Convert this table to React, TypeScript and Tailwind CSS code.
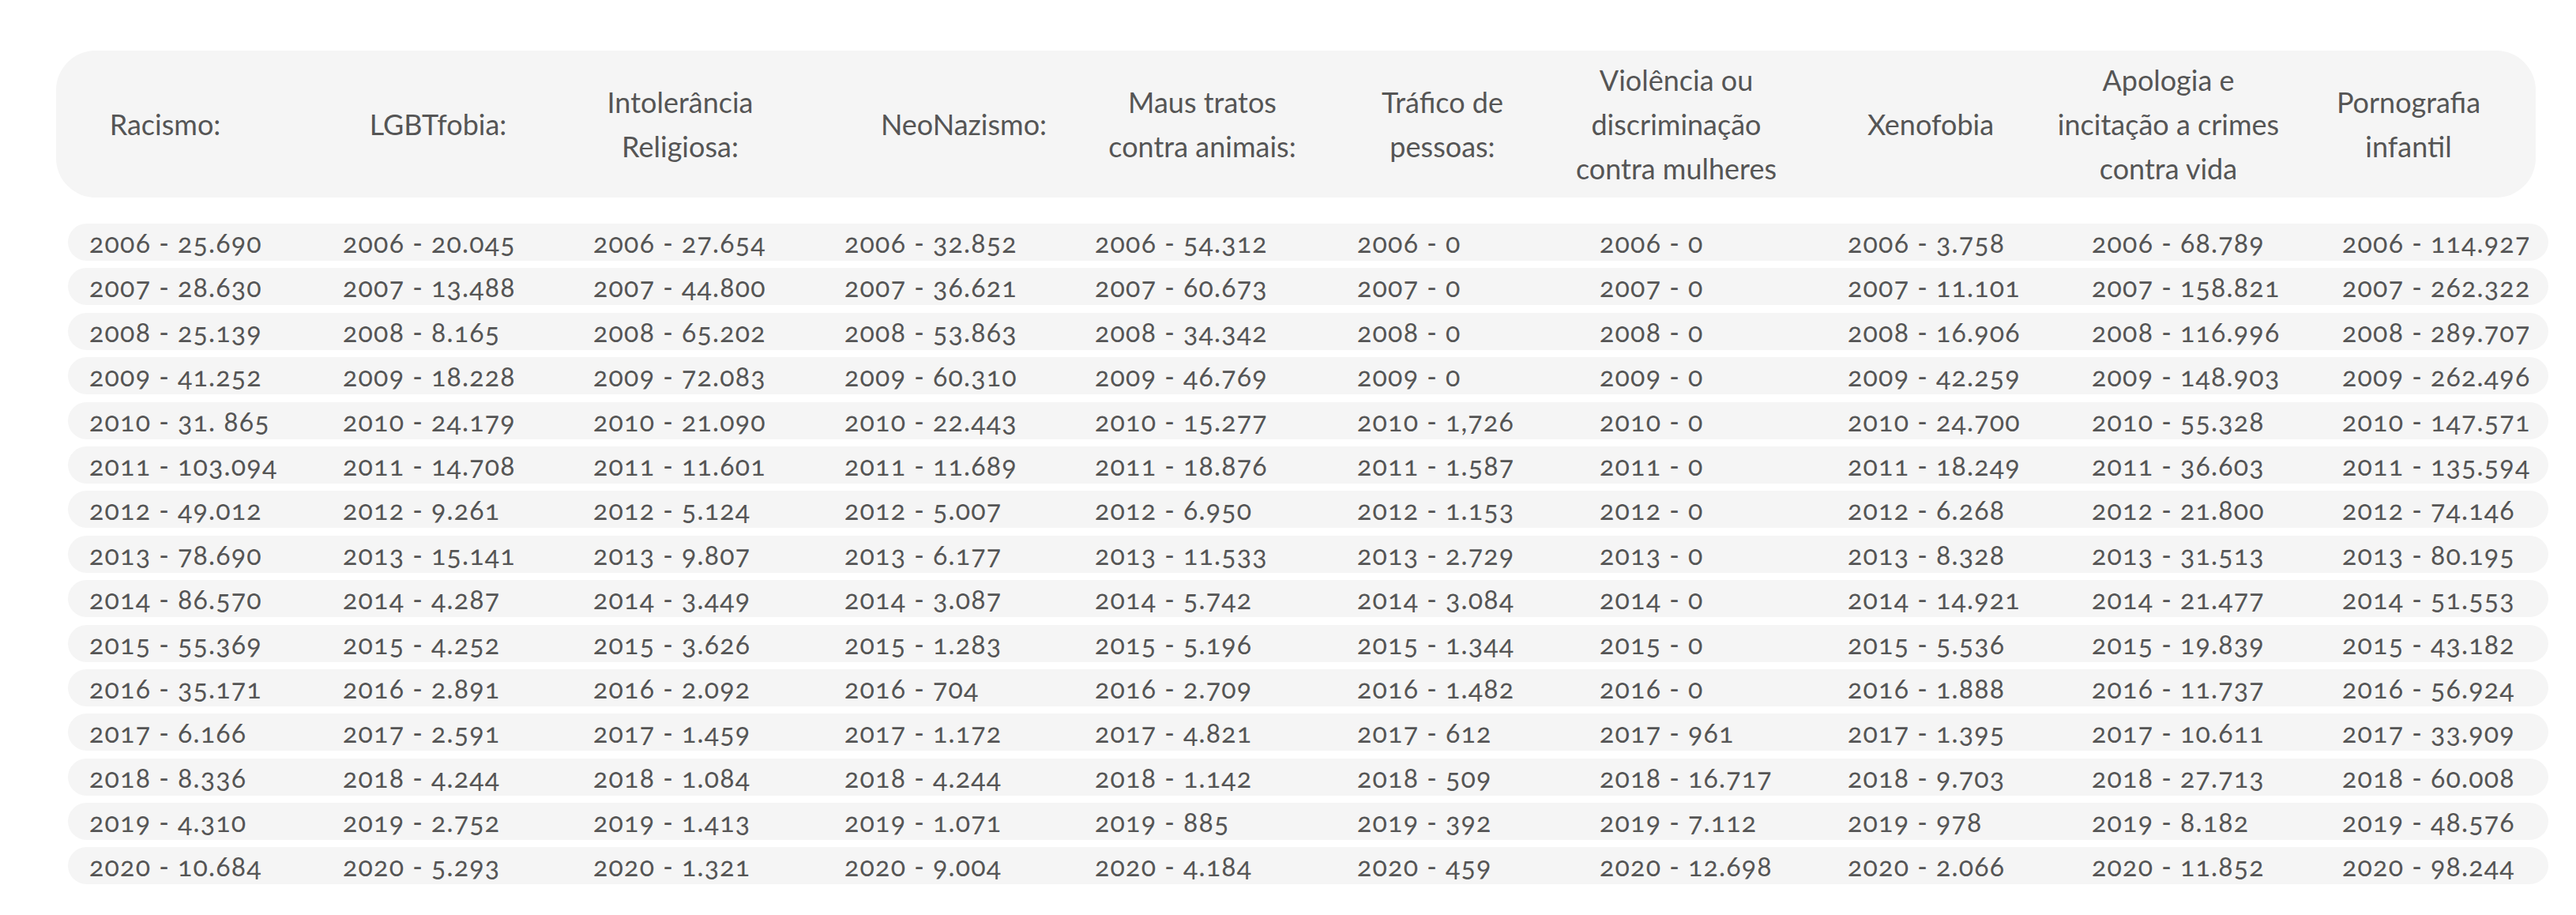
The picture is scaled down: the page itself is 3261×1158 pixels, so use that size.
import React from "react";

const headers: { lines: string[]; ml: string }[] = [
  { lines: ["Racismo:"], ml: "ml-[3px]" },
  { lines: ["LGBTfobia:"], ml: "ml-[75.5px]" },
  { lines: ["Intolerância", "Religiosa:"], ml: "ml-[36.5px]" },
  { lines: ["NeoNazismo:"], ml: "ml-[89px]" },
  { lines: ["Maus tratos", "contra animais:"], ml: "ml-[32px]" },
  { lines: ["Tráfico de", "pessoas:"], ml: "ml-[34px]" },
  { lines: ["Violência ou", "discriminação", "contra mulheres"], ml: "ml-[26px]" },
  { lines: ["Xenofobia"], ml: "ml-[52px]" },
  { lines: ["Apologia e", "incitação a crimes", "contra vida"], ml: "ml-[31px]" },
  { lines: ["Pornografia", "infantil"], ml: "ml-[34px]" },
];

const rows: [string, string[]][] = [
  ["2006", ["25.690", "20.045", "27.654", "32.852", "54.312", "0", "0", "3.758", "68.789", "114.927"]],
  ["2007", ["28.630", "13.488", "44.800", "36.621", "60.673", "0", "0", "11.101", "158.821", "262.322"]],
  ["2008", ["25.139", "8.165", "65.202", "53.863", "34.342", "0", "0", "16.906", "116.996", "289.707"]],
  ["2009", ["41.252", "18.228", "72.083", "60.310", "46.769", "0", "0", "42.259", "148.903", "262.496"]],
  ["2010", ["31. 865", "24.179", "21.090", "22.443", "15.277", "1,726", "0", "24.700", "55.328", "147.571"]],
  ["2011", ["103.094", "14.708", "11.601", "11.689", "18.876", "1.587", "0", "18.249", "36.603", "135.594"]],
  ["2012", ["49.012", "9.261", "5.124", "5.007", "6.950", "1.153", "0", "6.268", "21.800", "74.146"]],
  ["2013", ["78.690", "15.141", "9.807", "6.177", "11.533", "2.729", "0", "8.328", "31.513", "80.195"]],
  ["2014", ["86.570", "4.287", "3.449", "3.087", "5.742", "3.084", "0", "14.921", "21.477", "51.553"]],
  ["2015", ["55.369", "4.252", "3.626", "1.283", "5.196", "1.344", "0", "5.536", "19.839", "43.182"]],
  ["2016", ["35.171", "2.891", "2.092", "704", "2.709", "1.482", "0", "1.888", "11.737", "56.924"]],
  ["2017", ["6.166", "2.591", "1.459", "1.172", "4.821", "612", "961", "1.395", "10.611", "33.909"]],
  ["2018", ["8.336", "4.244", "1.084", "4.244", "1.142", "509", "16.717", "9.703", "27.713", "60.008"]],
  ["2019", ["4.310", "2.752", "1.413", "1.071", "885", "392", "7.112", "978", "8.182", "48.576"]],
  ["2020", ["10.684", "5.293", "1.321", "9.004", "4.184", "459", "12.698", "2.066", "11.852", "98.244"]],
];

export default function App() {
  return (
    <div
      className="w-[3261px] h-[1158px] bg-white text-[#555555] overflow-hidden"
      style={{ fontFamily: "Lato, 'Noto Sans', sans-serif" }}
    >
      <div className="pt-[64px] pl-[71px]">
        <div className="w-[3139px] h-[186px] rounded-[50px] bg-[#f5f5f5] flex items-center">
          {headers.map((h, i) => (
            <div
              key={i}
              className={`${h.ml} w-[270px] shrink-0 flex justify-center`}
            >
              <div className="text-center whitespace-nowrap text-[36px] leading-[56px]">
                {h.lines.map((l, j) => (
                  <div key={j}>{l}</div>
                ))}
              </div>
            </div>
          ))}
        </div>
      </div>
      <div className="mt-[33px] pl-[86px] flex flex-col gap-[9.4px]">
        {rows.map(([year, vals]) => (
          <div
            key={year}
            className="w-[3140px] h-[47px] rounded-full bg-[#f5f5f5] pl-[27px] grid grid-cols-[321px_317px_318px_317px_332px_307px_314px_309px_317px_1fr] items-center"
          >
            {vals.map((v, i) => (
              <div
                key={i}
                className="whitespace-nowrap text-[34px] leading-[47px] tracking-[1.2px] oldstyle-nums"
              >
                {year} - {v}
              </div>
            ))}
          </div>
        ))}
      </div>
    </div>
  );
}
